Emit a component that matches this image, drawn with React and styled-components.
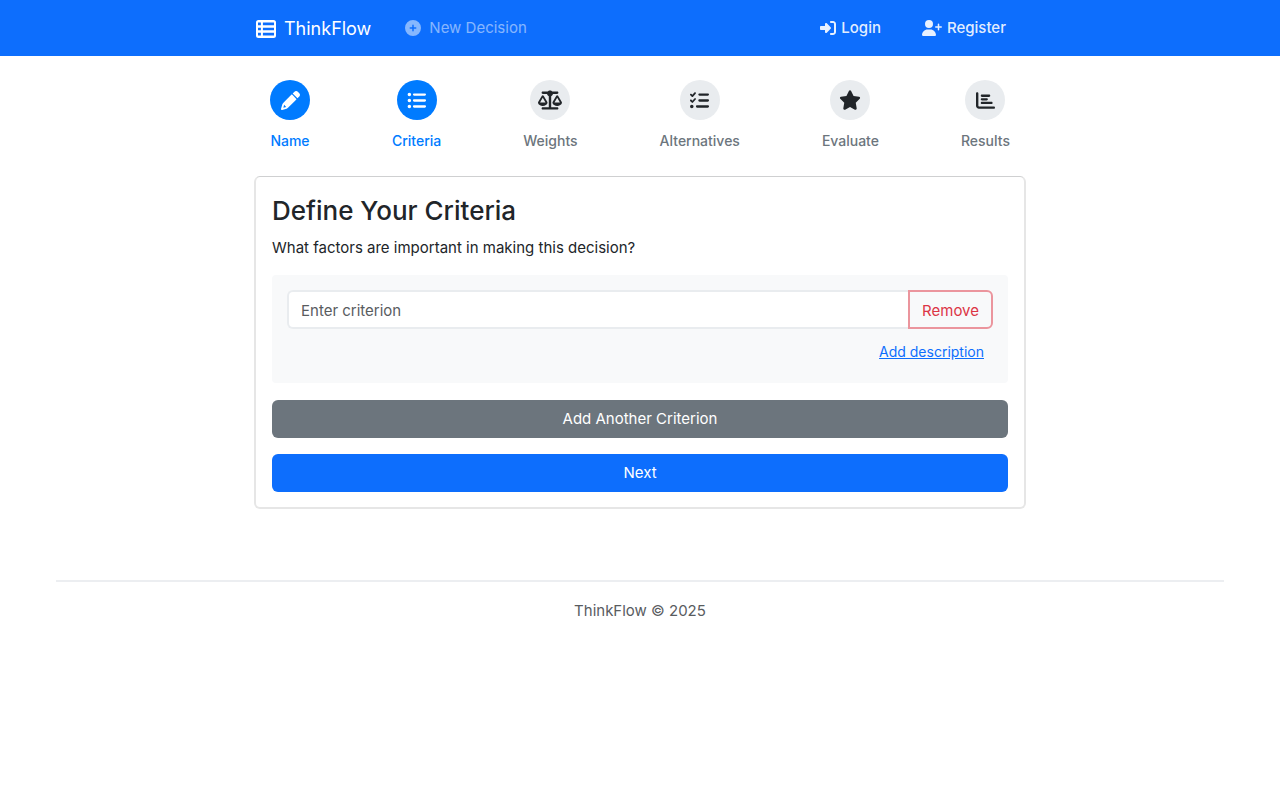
import React from "react";
import styled, { createGlobalStyle } from "styled-components";
import {
  FaCirclePlus, FaRightToBracket, FaUserPlus,
  FaListUl, FaScaleBalanced, FaListCheck, FaStar, FaChartBar,
} from "react-icons/fa6";

const GlobalStyle = createGlobalStyle`
  *, *::before, *::after { box-sizing: border-box; }
  body {
    margin: 0;
    background: #fff;
    color: #212529;
    font-family: Inter, "Liberation Sans", sans-serif;
    font-size: 15px;
    line-height: 24px;
  }
  button, input { font: inherit; }
`;

const Header = styled.header`
  background: #0d6efd;
`;

const Nav = styled.nav`
  display: flex;
  align-items: center;
  max-width: 772px;
  min-height: 56px;
  margin: 0 auto;
  padding: 0 20px 0 2px;
`;

const NavLink = styled.a`
  display: flex;
  align-items: center;
  gap: ${(p) => (p.$muted ? 8 : 5)}px;
  color: ${(p) => (p.$muted ? "rgba(255,255,255,.5)" : "rgba(255,255,255,.9)")};
  font-weight: ${(p) => (p.$muted ? 400 : 500)};
  text-decoration: none;
  svg { width: ${(p) => p.$iconWidth || 16}px; height: ${(p) => p.$iconWidth || 16}px; }
`;

const Brand = styled.a`
  display: flex;
  align-items: center;
  gap: 8px;
  margin-right: 34px;
  padding-top: 2px;
  color: #fff;
  font-size: 18px;
  text-decoration: none;
`;

const Account = styled.div`
  display: flex;
  gap: 41px;
  margin-left: auto;
`;

const Main = styled.main`
  max-width: 772px;
  margin: 0 auto;
  padding: 24px 0 71px;
`;

const Steps = styled.ol`
  display: flex;
  justify-content: space-between;
  list-style: none;
  margin: 0 0 24px;
  padding: 0 16px;
`;

const Step = styled.li`
  display: flex;
  flex-direction: column;
  align-items: center;
  gap: 10px;
  color: ${(p) => (p.$active ? "#007bff" : "#6c757d")};
  font-size: 14px;
  font-weight: 500;
  line-height: 22px;
`;

const StepIcon = styled.span`
  display: grid;
  place-items: center;
  width: 40px;
  height: 40px;
  border-radius: 50%;
  background: ${(p) => (p.$active ? "#007bff" : "#e9ecef")};
  color: ${(p) => (p.$active ? "#fff" : "#212529")};
  svg { width: ${(p) => p.$size}px; height: ${(p) => p.$size}px; }
`;

const Card = styled.form`
  border: 2px solid #e6e6e6;
  border-top: 1px solid #cfd0d1;
  border-radius: 6px;
  padding: 16px 16px 15px;
`;

const Title = styled.h1`
  margin: 0 0 7px;
  font-size: 26px;
  font-weight: 500;
  line-height: 36px;
`;

const Lead = styled.p`
  margin: 0 0 15px;
`;

const Panel = styled.div`
  display: flex;
  flex-direction: column;
  align-items: flex-end;
  gap: 8px;
  padding: 15px 15px 16px;
  border-radius: 4px;
  background: #f8f9fa;
`;

const InputGroup = styled.div`
  display: flex;
  width: 100%;
  height: 39px;
`;

const TextInput = styled.input`
  flex: 1;
  min-width: 0;
  padding: 2px 12px 0;
  border: 2px solid #e9ecef;
  border-right: 0;
  border-radius: 6px 0 0 6px;
  background: #fff;
  color: #212529;
  &::placeholder { color: #595c5f; opacity: 1; }
`;

const RemoveButton = styled.button`
  padding: 2px 12px 0;
  border: 2px solid #eb959d;
  border-radius: 0 6px 6px 0;
  background: transparent;
  color: #dc3545;
`;

const LinkButton = styled.button`
  height: 30px;
  padding: 0 9px;
  border: 0;
  background: none;
  color: #0d6efd;
  font-size: 14px;
  text-decoration: underline;
`;

const Actions = styled.div`
  display: flex;
  flex-direction: column;
  gap: 16px;
  margin-top: 17px;
`;

const BlockButton = styled.button`
  height: 38px;
  border: 0;
  border-radius: 6px;
  background: ${(p) => (p.$primary ? "#0d6efd" : "#6c757d")};
  color: #fff;
`;

const Footer = styled.footer`
  margin: 0 56px;
  padding: 17px 0;
  border-top: 2px solid #eceef1;
  color: #595c5f;
  text-align: center;
`;

const LogoIcon = () => (
  <svg width="20" height="18" viewBox="0 0 20 18" fill="currentColor" fillRule="evenodd" aria-hidden="true">
    <path d="M2.5 0h15A2.5 2.5 0 0 1 20 2.5v13a2.5 2.5 0 0 1-2.5 2.5h-15A2.5 2.5 0 0 1 0 15.500v-13A2.500 2.500 0 0 1 2.500 0zM2 2.600v2.600h2.900V2.600zM6.900 2.600v2.600H18V2.600zM2 7.700v2.600h2.900V7.700zM6.900 7.700v2.600H18V7.700zM2 12.800v2.600h2.900v-2.600zM6.900 12.800v2.600H18v-2.600z" />
  </svg>
);

const PencilIcon = () => (
  <svg viewBox="0 0 512 512" fill="currentColor" fillRule="evenodd" aria-hidden="true">
    <path d="M410.3 231l11.300-11.300-33.900-33.900-62.100-62.100-33.900-33.900-11.300 11.300-22.600 22.600L58.600 322.900c-10.400 10.400-18 23.300-22.200 37.400L1 480.700c-2.500 8.400-.2 17.500 6.100 23.700s15.300 8.500 23.700 6.100l120.300-35.400c14.100-4.200 27-11.800 37.400-22.200L387.700 253.700zM84 372l56 56-76 24zM362.700 18.700L314.300 67.100l130 130 48.400-48.400c25-25 25-65.500 0-90.500l-39.400-39.500c-25-25-65.500-25-90.600 0z" />
  </svg>
);

const steps = [
  { label: "Name", Icon: PencilIcon, active: true, size: 19 },
  { label: "Criteria", Icon: FaListUl, active: true, size: 19 },
  { label: "Weights", Icon: FaScaleBalanced, size: 24 },
  { label: "Alternatives", Icon: FaListCheck, size: 19 },
  { label: "Evaluate", Icon: FaStar, size: 22 },
  { label: "Results", Icon: FaChartBar, size: 19 },
];

export default function App() {
  return (
    <>
      <GlobalStyle />
      <Header>
        <Nav>
          <Brand href="#"><LogoIcon />ThinkFlow</Brand>
          <NavLink href="#new" $muted><FaCirclePlus />New Decision</NavLink>
          <Account>
            <NavLink href="#login"><FaRightToBracket />Login</NavLink>
            <NavLink href="#register" $iconWidth={20}><FaUserPlus />Register</NavLink>
          </Account>
        </Nav>
      </Header>
      <Main>
        <Steps>
          {steps.map(({ label, Icon, active, size }) => (
            <Step key={label} $active={active}>
              <StepIcon $active={active} $size={size}><Icon /></StepIcon>
              {label}
            </Step>
          ))}
        </Steps>
        <Card onSubmit={(e) => e.preventDefault()}>
          <Title>Define Your Criteria</Title>
          <Lead>What factors are important in making this decision?</Lead>
          <Panel>
            <InputGroup>
              <TextInput type="text" aria-label="Criterion" placeholder="Enter criterion" />
              <RemoveButton type="button">Remove</RemoveButton>
            </InputGroup>
            <LinkButton type="button">Add description</LinkButton>
          </Panel>
          <Actions>
            <BlockButton type="button">Add Another Criterion</BlockButton>
            <BlockButton type="submit" $primary>Next</BlockButton>
          </Actions>
        </Card>
      </Main>
      <Footer>ThinkFlow © 2025</Footer>
    </>
  );
}
